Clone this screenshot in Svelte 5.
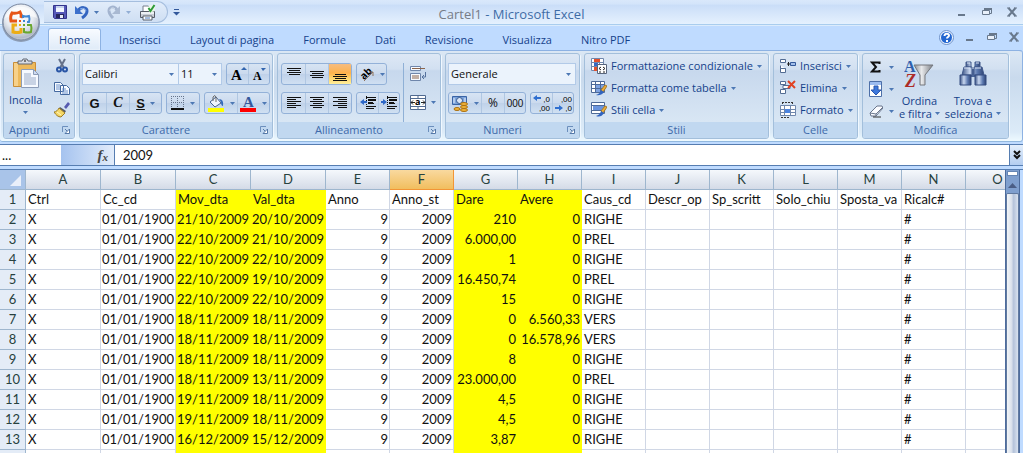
<script lang="ts">
	type Column = { name: string; wide?: boolean; yellow?: boolean; right?: boolean };

	const columns: Column[] = [
		{ name: 'A', wide: true },
		{ name: 'B', wide: true, right: true },
		{ name: 'C', wide: true, yellow: true, right: true },
		{ name: 'D', wide: true, yellow: true, right: true },
		{ name: 'E', right: true },
		{ name: 'F', right: true },
		{ name: 'G', yellow: true, right: true },
		{ name: 'H', yellow: true, right: true },
		{ name: 'I' },
		{ name: 'J' },
		{ name: 'K' },
		{ name: 'L' },
		{ name: 'M' },
		{ name: 'N' },
		{ name: 'O' }
	];

	const titles = [
		'Ctrl', 'Cc_cd', 'Mov_dta', 'Val_dta', 'Anno', 'Anno_st', 'Dare', 'Avere',
		'Caus_cd', 'Descr_op', 'Sp_scritt', 'Solo_chiu', 'Sposta_va', 'Ricalc#', ''
	];

	const movements = [
		['21/10/2009', '20/10/2009', '210', '0', 'RIGHE'],
		['22/10/2009', '21/10/2009', '6.000,00', '0', 'PREL'],
		['22/10/2009', '22/10/2009', '1', '0', 'RIGHE'],
		['22/10/2009', '19/10/2009', '16.450,74', '0', 'PREL'],
		['22/10/2009', '22/10/2009', '15', '0', 'RIGHE'],
		['18/11/2009', '18/11/2009', '0', '6.560,33', 'VERS'],
		['18/11/2009', '18/11/2009', '0', '16.578,96', 'VERS'],
		['18/11/2009', '18/11/2009', '8', '0', 'RIGHE'],
		['18/11/2009', '13/11/2009', '23.000,00', '0', 'PREL'],
		['19/11/2009', '18/11/2009', '4,5', '0', 'RIGHE'],
		['19/11/2009', '18/11/2009', '4,5', '0', 'RIGHE'],
		['16/12/2009', '15/12/2009', '3,87', '0', 'RIGHE']
	];

	const rows = [
		...movements.map(([mov, val, dare, avere, caus]) => [
			'X', '01/01/1900', mov, val, '9', '2009', dare, avere, caus, '', '', '', '', '#', ''
		]),
		columns.map(() => '')
	];

	const tabs = ['Home', 'Inserisci', 'Layout di pagina', 'Formule', 'Dati', 'Revisione', 'Visualizza', 'Nitro PDF'];

	let activeTab = $state('Home');
	let formula = $state('2009');
	let valign = $state('bottom');
</script>

{#snippet caret()}
	<svg class="caret" width="5" height="3" viewBox="0 0 5 3"><path d="M0 0h5L2.5 3z" fill="#4d78b4" /></svg>
{/snippet}

{#snippet launcher(name: string)}
	<button class="launcher" aria-label={name}>
		<svg width="8" height="8" viewBox="0 0 8 8">
			<path d="M.5 6V.5H6" fill="none" stroke="#6c8fbd" />
			<path d="M3 3l3 3" stroke="#5578a8" />
			<path d="M7.500 3v4.500H3z" fill="#fff" stroke="#5578a8" />
		</svg>
	</button>
{/snippet}

{#snippet lines(list: number[][])}
	<svg width="14" height="14" viewBox="0 0 14 14">
		{#each list as [x, y, w]}
			<rect {x} {y} width={w} height="1" fill="#111" />
		{/each}
	</svg>
{/snippet}

{#snippet windowButtons()}
	<button aria-label="Riduci a icona"><svg width="10" height="10"><path d="M1 8h7" stroke="#68788c" stroke-width="2" /></svg></button>
	<button aria-label="Ripristina">
		<svg width="10" height="10"><path d="M2.500 3V1.500h7v5H8" fill="none" stroke="#68788c" /><path d="M2 1h8v2H2z" fill="#68788c" /><path d="M.5 3.500h7v4h-7z" fill="#e8f0fa" stroke="#68788c" /></svg>
	</button>
	<button aria-label="Chiudi"><svg width="10" height="10"><path d="M0 1h3M7 1h3M0 9h3M7 9h3" stroke="#68788c" /><path d="M1.500 1l7 8M8.500 1l-7 8" stroke="#68788c" stroke-width="2" /></svg></button>
{/snippet}

{#snippet decimals(top: string, bottom: string, arrowTop: boolean)}
	<svg class="decimals" width="19" height="18" viewBox="0 0 19 18">
		<text x="18" y="8" text-anchor="end">{top}</text>
		<text x="18" y="17" text-anchor="end">{bottom}</text>
		{#if arrowTop}
			<path d="M1 4l4-3v2h4v2H5v2z" fill="#2f6fd0" />
		{:else}
			<path d="M9 14l-4-3v2H1v2h4v2z" fill="#2f6fd0" />
		{/if}
	</svg>
{/snippet}

<div class="excel">
	<header class="titlebar">
		<div class="left">
			<div class="quick">
				<button aria-label="Salva">
					<svg width="14" height="14" viewBox="0 0 14 14">
						<path d="M.5.5h13v13h-12l-1-1z" fill="#5558b8" stroke="#34348c" />
						<rect x="3" y="1" width="8" height="6" fill="#f2f6ff" />
						<path d="M3 1h8v2H3z" fill="#c6d2ee" />
						<rect x="3" y="9" width="8" height="4" fill="#26265c" /><rect x="7" y="10" width="3" height="3" fill="#e8ecf8" />
					</svg>
				</button>
				<button class="undo" aria-label="Annulla">
					<svg width="14" height="15" viewBox="0 0 14 15">
						<path d="M3 6c3-5 9-4 9 0 0 3-2 5-5 7" fill="none" stroke="#3465c0" stroke-width="3" />
						<path d="M0 1v8h8z" fill="#3c70cc" />
						<path d="M5 4q5-2 6 2" fill="none" stroke="#8db2ec" />
					</svg>
					{@render caret()}
				</button>
				<button class="redo" aria-label="Ripeti">
					<svg width="14" height="15" viewBox="0 0 14 15">
						<path d="M10 5C7 0 2 2 2 6c0 3 2 5 4 7" fill="none" stroke="#a3b4cf" stroke-width="3" />
						<path d="M13 1v8H5z" fill="#a9b9d2" /><path d="M3 6c0-3 3-4 5-2" fill="none" stroke="#dbe5f2" />
					</svg>
					{@render caret()}
				</button>
				<button aria-label="Stampa">
					<svg width="17" height="17" viewBox="0 0 17 17">
						<path d="M4 8V2h5l3 2v4z" fill="#fff" stroke="#777f8c" />
						<path d="M1.500 7.500h14v6h-14z" fill="#c9ced6" stroke="#555b66" />
						<path d="M2 8h13v2H2z" fill="#eef1f5" /><path d="M4 12h9v4H4z" fill="#fff" stroke="#59606c" />
						<path d="M6 14h5" stroke="#4c78ba" /><circle cx="12.500" cy="4.500" r="3.500" fill="#eaf7e6" /><path d="M9.500 4l2 3 4-6" fill="none" stroke="#2d9a38" stroke-width="2" />
					</svg>
				</button>
			</div>
			<button class="customize" aria-label="Personalizza barra di accesso rapido">
				<svg width="7" height="7"><path d="M1 .5h5" stroke="#31589c" /><path d="M0 3h7L3.500 6.500z" fill="#31589c" /></svg>
			</button>
		</div>
		<h1><span>Cartel1</span> - Microsoft Excel</h1>
		<div class="window">{@render windowButtons()}</div>
	</header>

	<button class="office" aria-label="Pulsante Office">
		<svg width="42" height="42" viewBox="0 0 42 42">
			<defs>
				<radialGradient id="orb" cx=".45" cy=".3" r=".8">
					<stop offset="0" stop-color="#fff" />
					<stop offset=".5" stop-color="#e7ebf1" />
					<stop offset=".8" stop-color="#b1b9c8" />
					<stop offset="1" stop-color="#eef3f8" />
				</radialGradient>
			</defs>
			<circle cx="21" cy="22" r="19" fill="#8d9db5" />
			<circle cx="21" cy="21" r="18" fill="url(#orb)" stroke="#7c8aa2" />
			<path d="M5 17c3-15 29-15 32 0-10-4-22-4-32 0z" fill="#fff" opacity=".6" />
			<path d="M17 20h-6q-1-5 1-8 4 1 8-1 2 3 1 6" fill="none" stroke="#e65518" stroke-width="3" />
			<path d="M23 17v-2q3 1 6 0 1 3 0 6h-2" fill="none" stroke="#3f87d5" stroke-width="2" />
			<path d="M17 24h-4v7q4 1 8 0v-4" fill="none" stroke="#ecad16" stroke-width="3" />
			<path d="M24 27v4q4 1 7 0 1-4 0-7h-4" fill="none" stroke="#69a72d" stroke-width="2" />
			<path d="M19 19h2v2h-2z" fill="#e65518" /><path d="M23 19h2v2h-2z" fill="#3f87d5" /><path d="M19 23h2v2h-2z" fill="#ecad16" /><path d="M23 23h2v2h-2z" fill="#69a72d" />
		</svg>
	</button>

	<nav class="tabs">
		{#each tabs as tab}
			<button class:active={tab === activeTab} onclick={() => (activeTab = tab)}>{tab}</button>
		{/each}
		<button class="help" aria-label="Guida">
			<svg width="15" height="15" viewBox="0 0 15 15">
				<circle cx="7.500" cy="7.500" r="7" fill="#eef5ff" stroke="#6c91ca" /><circle cx="7.500" cy="7.500" r="5.500" fill="#2467d0" />
				<path d="M5.500 6c0-3 4.500-3 4.500-.5 0 1.500-2 1.500-2 3M8 10v2" fill="none" stroke="#fff" stroke-width="2" />
			</svg>
		</button>
		<div class="window book">{@render windowButtons()}</div>
	</nav>

	<div class="ribbon">
		<section class="group clipboard">
			<div class="body">
				<button class="big">
					<svg width="28" height="32" viewBox="0 0 28 32">
						<path d="M1.500 4.500h22v24h-22z" fill="#edb95b" stroke="#c98e38" />
						<path d="M2 5h4v23H2z" fill="#f7d18a" />
						<path d="M6 6V3h4l1-2h4l1 2h4v3z" fill="#d5dae2" stroke="#626975" /><circle cx="13" cy="3" r="1" fill="#555" />
						<path d="M9.500 11.500h12l5 5v13h-17z" fill="#f6f9ff" stroke="#8c9cb8" />
						<path d="M21.500 11.500v5h5z" fill="#cfdcf2" stroke="#8c9cb8" />
						<path d="M12 16h7M12 18h7M12 20h12M12 22h12M12 24h12M12 26h12" stroke="#9bacc9" />
					</svg>
					<span>Incolla</span>
					{@render caret()}
				</button>
				<div class="stack">
					<button aria-label="Taglia">
						<svg width="16" height="16" viewBox="0 0 16 16">
							<path d="M5 1l5 9M11 1L6 10" stroke="#66728a" stroke-width="2" />
							<circle cx="5" cy="11.500" r="2" fill="none" stroke="#2a56a6" stroke-width="2" /><circle cx="11" cy="11.500" r="2" fill="none" stroke="#2a56a6" stroke-width="2" />
						</svg>
					</button>
					<button aria-label="Copia">
						<svg width="16" height="16" viewBox="0 0 16 16">
							<path d="M.5 2.500h6l3 3v6h-9zM6.500 5.500h6l3 3v6h-9z" fill="#f8fbff" stroke="#45699f" />
							<path d="M2 5h4M2 7h4M2 9h4M8 9h4M8 11h6M8 13h6" stroke="#6d92cc" />
						</svg>
					</button>
					<button aria-label="Copia formato">
						<svg width="16" height="16" viewBox="0 0 16 16">
							<path d="M10 5l4-5 2 2-4 5z" fill="#575bb0" /><path d="M6 5l6 4-2 3-6-4z" fill="#555b68" />
							<path d="M5 6l6 5-4 4c-3 0-5-2-7-5 2 0 4-2 5-4z" fill="#f4d766" stroke="#9c7c28" /><path d="M3 10l4 3" stroke="#fff5c0" />
						</svg>
					</button>
				</div>
			</div>
			<footer>Appunti {@render launcher('Opzioni appunti')}</footer>
		</section>

		<section class="group font">
			<div class="body rows">
				<div class="row">
					<div class="joined">
						<label class="combo name"><select aria-label="Tipo di carattere"><option>Calibri</option></select>{@render caret()}</label>
						<label class="combo size"><select aria-label="Dimensione"><option>11</option></select>{@render caret()}</label>
					</div>
					<div class="btns push">
						<button class="w22" aria-label="Aumenta dimensione"><svg width="20" height="18"><text x="3" y="15" class="serif" font-size="15">A</text><path d="M13 5l3-3 3 3z" fill="#3265ae" /></svg></button>
						<button class="w22" aria-label="Riduci dimensione"><svg width="20" height="18"><text x="4" y="15" class="serif" font-size="12">A</text><path d="M12 3h5l-3 3z" fill="#3265ae" /></svg></button>
					</div>
				</div>
				<div class="row spread">
					<div class="btns">
						<button class="w23 bold">G</button>
						<button class="w23 italic">C</button>
						<button class="w33"><u>S</u>{@render caret()}</button>
					</div>
					<div class="btns">
						<button class="w33" aria-label="Bordi">
							<svg width="14" height="14"><path d="M.5 0v12M6.500 0v12M12.500 0v12M0 .5h13M0 6.500h13" stroke="#65748c" stroke-dasharray="1 1" /><path d="M0 13h13" stroke="#111" stroke-width="2" /></svg>
							{@render caret()}
						</button>
					</div>
					<div class="btns">
						<button class="w33" aria-label="Colore riempimento">
							<svg width="17" height="17" viewBox="0 0 17 17">
								<path d="M2 7l6-5 5 6-6 4z" fill="#eef4fd" stroke="#48638f" /><path d="M5 6V2q2-3 3 0v5" fill="none" stroke="#6a6a6a" />
								<path d="M11 4q5 0 4 7-2 0-2-4z" fill="#356cbc" /><path d="M0 13h16v4H0z" fill="#ff0" />
							</svg>
							{@render caret()}
						</button>
						<button class="w33" aria-label="Colore carattere">
							<svg width="17" height="17"><text x="3" y="12" class="serif blue" font-size="15">A</text><path d="M0 13h16v4H0z" fill="#f00" /></svg>
							{@render caret()}
						</button>
					</div>
				</div>
			</div>
			<footer>Carattere {@render launcher('Opzioni carattere')}</footer>
		</section>

		<section class="group align">
			<div class="body">
				<div class="rows">
					<div class="row">
						<div class="btns">
							<button class="w23" class:on={valign === 'top'} onclick={() => (valign = 'top')} aria-label="Allinea in alto">{@render lines([[0, 1, 14], [2, 3, 11], [0, 5, 14], [2, 7, 11]])}</button>
							<button class="w23" class:on={valign === 'middle'} onclick={() => (valign = 'middle')} aria-label="Allinea al centro verticalmente">{@render lines([[0, 4, 14], [2, 6, 11], [0, 8, 14], [2, 10, 11]])}</button>
							<button class="w23" class:on={valign === 'bottom'} onclick={() => (valign = 'bottom')} aria-label="Allinea in basso">{@render lines([[2, 7, 11], [0, 9, 14], [2, 11, 11], [0, 13, 14]])}</button>
						</div>
						<div class="btns">
							<button class="w29" aria-label="Orientamento">
								<svg width="17" height="18"><text x="2" y="12" transform="rotate(-45 8 9)" font-size="10" font-weight="bold">ab</text><path d="M6 16l9-9M15 11V7h-4" fill="none" stroke="#8d725c" /></svg>
								{@render caret()}
							</button>
						</div>
					</div>
					<div class="row">
						<div class="btns">
							<button class="w23" aria-label="Allinea a sinistra">{@render lines([[0, 1, 14], [0, 3, 9], [0, 5, 14], [0, 7, 9], [0, 9, 14], [0, 11, 9]])}</button>
							<button class="w23" aria-label="Centra">{@render lines([[0, 1, 14], [3, 3, 9], [0, 5, 14], [3, 7, 9], [0, 9, 14], [3, 11, 9]])}</button>
							<button class="w23" aria-label="Allinea a destra">{@render lines([[0, 1, 14], [5, 3, 9], [0, 5, 14], [5, 7, 9], [0, 9, 14], [5, 11, 9]])}</button>
						</div>
						<div class="btns">
							<button class="w22" aria-label="Riduci rientro">
								<svg width="16" height="14"><path d="M6 1.500h10M6 10.500h10M8 7.500h6M6 12.500h8" stroke="#111" /><path d="M8 4h8M8 7h5" stroke="#111" stroke-width="2" /><path d="M6.500 0v14" stroke="#111" stroke-dasharray="1 1" /><path d="M0 6l4-3v2h3v2H4v2z" fill="#2d67c8" /></svg>
							</button>
							<button class="w22" aria-label="Aumenta rientro">
								<svg width="16" height="14"><path d="M6 1.500h10M6 10.500h10M8 7.500h6M6 12.500h8" stroke="#111" /><path d="M8 4h8M8 7h5" stroke="#111" stroke-width="2" /><path d="M6.500 0v14" stroke="#111" stroke-dasharray="1 1" /><path d="M6 6L2 3v2H0v2h2v2z" fill="#2d67c8" /></svg>
							</button>
						</div>
					</div>
				</div>
				<div class="rows wrapping">
					<button class="flat" aria-label="Testo a capo">
						<svg width="17" height="16"><path d="M.5.5h10v4H.5zM.5 7.500h10v7H.5z" fill="#f7faff" stroke="#6f86ab" /><path d="M2 2.500h13M2 10h7M2 12h7" stroke="#8b654c" /><path d="M15.500 6v5H12M14 9l-2 2 2 2" fill="none" stroke="#55719c" /></svg>
					</button>
					<button class="flat" aria-label="Unisci e centra">
						<svg width="16" height="15"><path d="M.5.5h15v14H.5zM8 .5v3M8 11v3.500M.5 3.500h15M.5 11.500h15" fill="#fff" stroke="#506a91" /><path d="M1 7.500h4M11 7.500h4M3 5.500l-2 2 2 2M13 5.500l2 2-2 2" fill="none" stroke="#222" /><text x="5" y="10" font-size="9" font-weight="bold">a</text></svg>
						{@render caret()}
					</button>
				</div>
			</div>
			<footer>Allineamento {@render launcher('Opzioni allineamento')}</footer>
		</section>

		<section class="group number">
			<div class="body rows">
				<label class="combo format"><select aria-label="Formato numero"><option>Generale</option></select>{@render caret()}</label>
				<div class="row">
					<div class="btns">
						<button class="w33" aria-label="Formato contabilità">
							<svg width="18" height="17"><path d="M1.500 1.500h14v8h-14z" fill="#7ea5dc" stroke="#3a64a6" /><circle cx="8.500" cy="5.500" r="3" fill="#d9e6f8" stroke="#34578e" /><path d="M3 3v5M14 3v5" stroke="#e9f1fc" /><g fill="#f0b33a" stroke="#a97012"><ellipse cx="13" cy="15" rx="3.500" ry="1.500" /><ellipse cx="13" cy="12" rx="3.500" ry="1.500" /><ellipse cx="13" cy="9" rx="3.500" ry="1.500" /><ellipse cx="6" cy="14" rx="3" ry="1.500" /></g></svg>
							{@render caret()}
						</button>
						<button class="w23 sign">%</button>
						<button class="w22 small">000</button>
					</div>
					<div class="btns">
						<button class="w22" aria-label="Aumenta decimali">{@render decimals(',0', ',00', true)}</button>
						<button class="w22" aria-label="Diminuisci decimali">{@render decimals(',00', ',0', false)}</button>
					</div>
				</div>
			</div>
			<footer>Numeri {@render launcher('Opzioni numeri')}</footer>
		</section>

		<section class="group styles">
			<div class="body list">
				<button>
					<svg width="16" height="16"><path d="M.5.5h12v12H.5zM.5 4.500h12M.5 8.500h12M4.500.5v12M8.500.5v12" fill="#fff" stroke="#7087ac" /><path d="M3 1h6v3H3zM3 9h3v4H3z" fill="#e2502c" /><path d="M3 5h4v3H3z" fill="#3569c4" /><path d="M6.500 6.500h9v9h-9z" fill="#fff" stroke="#57657c" /><path d="M10 9l-2 1.500 2 1.500M12 9l2 1.500-2 1.500M8 14h2M12 14h2" fill="none" stroke="#222" /></svg>
					Formattazione condizionale {@render caret()}
				</button>
				<button>
					<svg width="16" height="16"><path d="M.5 1.500h13v11H.5z" fill="#fff" stroke="#4e6a98" /><path d="M4 5h9v7H4z" fill="#7fa3e0" /><path d="M.5 4.500h13M.5 8.500h13M4.500 1v12M9.500 1v12" stroke="#4e6a98" /><path d="M10 10l4-5 2 1-4 6z" fill="#f0ad38" stroke="#a47a28" /><path d="M5 15q5 1 8-3l-3-2q-1 4-5 5z" fill="#3164c0" /></svg>
					Formatta come tabella {@render caret()}
				</button>
				<button>
					<svg width="16" height="16"><path d="M.5.5h13v11H.5z" fill="#fff" stroke="#4e6a98" /><path d="M2 4h11v4H2z" fill="#6a94dd" /><path d="M.5 3.500h13M.5 8.500h13" stroke="#4e6a98" /><path d="M10 9l4-5 2 1-4 6z" fill="#f0ad38" stroke="#a47a28" /><path d="M5 14q5 2 8-3l-3-2q-1 4-5 5z" fill="#3164c0" /></svg>
					Stili cella {@render caret()}
				</button>
			</div>
			<footer>Stili</footer>
		</section>

		<section class="group cells">
			<div class="body list">
				<button>
					<svg width="16" height="16"><path d="M.5 1.500h5v3h-5zM.5 10.500h5v4h-5zM.5 7.500v3h5" fill="#fff" stroke="#536c93" /><path d="M7 6h4M8.500 4v4" stroke="#222" /><path d="M10.500 4.500h5v3h-5z" fill="#a3bfea" stroke="#34599a" /></svg>
					Inserisci {@render caret()}
				</button>
				<button>
					<svg width="16" height="16"><path d="M.5 1.500h5v3h-5zM.5 9.500h5v4h-5zM3 5.500h7v3H3z" fill="#fff" stroke="#536c93" /><path d="M8 1l7 7M15 1L8 8" stroke="#e14223" stroke-width="2" /></svg>
					Elimina {@render caret()}
				</button>
				<button>
					<svg width="16" height="16"><path d="M.5 3.500h15v10H.5zM.5 7.500h15M.5 10.500h15M4.500 3v11M10.500 3v11" fill="#fff" stroke="#6f87ad" /><path d="M5 7h5v4H5z" fill="#4b84e0" /><path d="M2 .5h11M2.500 0v3M12.500 0v3M1 15.500h9" stroke="#333" stroke-dasharray="2 1" /></svg>
					Formato {@render caret()}
				</button>
			</div>
			<footer>Celle</footer>
		</section>

		<section class="group edit">
			<div class="body">
				<div class="list icons">
					<button aria-label="Somma"><svg width="14" height="14"><path d="M10.500 4V2.500H3l4 4.500-4 4.500h7.500V10" fill="none" stroke="#111" stroke-width="2" /></svg>{@render caret()}</button>
					<button aria-label="Riempimento"><svg width="14" height="16"><path d="M.5.5h12v15H.5z" fill="#fff" stroke="#4d6fa8" /><path d="M1 1h11v3H1z" fill="#9cbcf0" /><path d="M5 5h4v4h3l-5 5-5-5h3z" fill="#3d78dc" stroke="#2a57ae" /></svg>{@render caret()}</button>
					<button aria-label="Cancella"><svg width="14" height="14"><path d="M1 9l7-7h5l1 2-7 8H2z" fill="#fbfcff" stroke="#68758c" /><path d="M1 9l6 1 7-7M7 10v2" fill="none" stroke="#68758c" /><path d="M4 13h8" stroke="#333" /></svg>{@render caret()}</button>
				</div>
				<button class="big">
					<svg width="30" height="30" viewBox="0 0 30 30">
						<defs><linearGradient id="funnel"><stop offset="0" stop-color="#8c8f94" /><stop offset=".4" stop-color="#e9eaec" /><stop offset="1" stop-color="#7b7e84" /></linearGradient></defs>
						<path d="M10 6h19l-8 10v10h-5V16z" fill="url(#funnel)" stroke="#74777d" />
						<text x="0" y="13" class="serif" font-size="16" fill="#2f60ad">A</text><text x="1" y="28" class="serif" font-size="18" font-style="italic" fill="#ac2c28">Z</text>
					</svg>
					<span>Ordina</span>
					<span>e filtra {@render caret()}</span>
				</button>
				<button class="big">
					<svg width="28" height="30" viewBox="0 0 28 30">
						<defs><linearGradient id="tube"><stop offset="0" stop-color="#3c5486" /><stop offset=".35" stop-color="#c7d6ef" /><stop offset=".7" stop-color="#5b78af" /><stop offset="1" stop-color="#2d4272" /></linearGradient></defs>
						<path d="M11 10h6v8h-6z" fill="#4a6497" /><path d="M7 3h5v5H7zM16 3h5v5h-5z" fill="url(#tube)" stroke="#40588a" />
						<path d="M5 8h8v8H3zM15 8h8l2 8H15z" fill="url(#tube)" stroke="#40588a" />
						<path d="M1 16h11v10H1z" fill="url(#tube)" stroke="#354d80" /><path d="M16 16h11v10H16z" fill="url(#tube)" stroke="#354d80" />
						<path d="M8 4h3M17 4h3M5 9h6M16 9h6" stroke="#dce7f8" />
					</svg>
					<span>Trova e</span>
					<span>seleziona {@render caret()}</span>
				</button>
			</div>
			<footer>Modifica</footer>
		</section>
	</div>

	<div class="formula">
		<div class="namebox">...</div>
		<button class="fx" aria-label="Inserisci funzione"><i>f</i><small>x</small></button>
		<input aria-label="Barra della formula" bind:value={formula} />
		<button class="expand" aria-label="Espandi barra della formula">
			<svg width="8" height="10"><path d="M1 1l3 3 3-3M1 5l3 3 3-3" fill="none" stroke="#111" stroke-width="2" /></svg>
		</button>
	</div>

	<main>
		<div class="sheet">
			<table>
				<colgroup>
					<col class="index" />
					{#each columns as column}<col class:wide={column.wide} />{/each}
				</colgroup>
				<thead>
					<tr>
						<th class="corner" aria-label="Seleziona tutto"><svg width="11" height="11"><path d="M11 0v11H0z" fill="#e9effa" /></svg></th>
						{#each columns as column}
							<th scope="col" class:selected={column.name === 'F'}>{column.name}</th>
						{/each}
					</tr>
				</thead>
				<tbody>
					<tr>
						<th scope="row">1</th>
						{#each titles as title, i}
							<td class:yellow={columns[i].yellow}>{title}</td>
						{/each}
					</tr>
					{#each rows as row, n}
						<tr>
							<th scope="row">{n + 2}</th>
							{#each row as cell, i}
								<td class:yellow={columns[i].yellow} class:right={columns[i].right}>{cell}</td>
							{/each}
						</tr>
					{/each}
				</tbody>
			</table>
		</div>
		<div class="scroll">
			<div class="split"></div>
			<button class="up" aria-label="Scorri in alto"><svg width="9" height="5"><path d="M0 5l4.500-5L9 5z" fill="#4a5d85" /></svg></button>
			<div class="thumb"></div>
		</div>
	</main>
</div>

<style>
	:global(body) {
		margin: 0;
		overflow: hidden;
	}

	.excel {
		position: relative;
		display: flex;
		flex-direction: column;
		height: 100vh;
		background: #bfdbff;
		color: #15428b;
		font: 11px/14px 'Open Sans', 'Noto Sans', sans-serif;
	}

	button {
		display: flex;
		align-items: center;
		justify-content: center;
		margin: 0;
		padding: 0;
		border: 0;
		background: none;
		color: inherit;
		font: inherit;
		white-space: nowrap;
	}

	svg {
		display: block;
		flex: none;
	}

	/* title bar */
	.titlebar {
		display: grid;
		grid-template-columns: 1fr auto 1fr;
		align-items: center;
		height: 24px;
		border-bottom: 1px solid #a9cdee;
		box-shadow: 0 1px #dcecfc;
		background: linear-gradient(#d9e8fb 0, #d3e4fa 18%, #c9ddf8 20%, #e5f1fe 100%);
	}

	.left {
		display: flex;
		align-items: center;
		padding-left: 44px;
	}

	.quick {
		display: flex;
		align-items: center;
		gap: 8px;
		height: 20px;
		padding: 0 11px 0 9px;
		border: 1px solid #a5bede;
		border-left: 0;
		border-radius: 0 11px 11px 0;
		background: linear-gradient(#e1ecfa, #cfdff3);
	}

	.undo,
	.redo {
		gap: 5px;
	}

	.redo .caret {
		opacity: 0.5;
	}

	.customize {
		margin-left: 5px;
	}

	h1 {
		margin: 0;
		padding-top: 4px;
		color: #3f6ca6;
		font-size: 13px;
		font-weight: normal;
	}

	h1 span {
		color: #767c86;
	}

	.window {
		display: flex;
		justify-content: flex-end;
		gap: 15px;
		padding-right: 6px;
	}

	.window.book {
		gap: 12px;
		padding: 0 4px 8px 3px;
	}

	.office {
		position: absolute;
		top: 1px;
		left: 0;
		z-index: 1;
	}

	/* tabs */
	.tabs {
		display: flex;
		align-items: flex-end;
		gap: 7px;
		height: 25px;
		padding-left: 48px;
	}

	.tabs > button {
		height: 22px;
		padding: 0 10px;
		border: 1px solid transparent;
		border-bottom: 0;
	}

	.tabs > .active {
		border-color: #8db2e3;
		border-radius: 3px 3px 0 0;
		background: linear-gradient(#f8fbff, #dfebf8);
		box-shadow: inset 0 0 2px #fff;
	}

	.tabs > .help {
		margin-left: auto;
		padding: 0 0 4px;
	}

	/* ribbon */
	.ribbon {
		display: flex;
		gap: 4px;
		height: 86px;
		padding: 2px 3px;
		border-top: 1px solid #8db2e3;
		border-bottom: 1px solid #92b8de;
		border-radius: 0 3px 3px 3px;
		background: linear-gradient(#dbe7f4, #c9daed 30%, #dcebf8 90%, #eefaff);
		box-shadow: inset 1px 0 #eaf4ff, inset -1px 0 #8db2e3;
	}

	.group {
		display: flex;
		flex-direction: column;
		box-sizing: border-box;
		border: 1px solid #a3bfdb;
		border-radius: 3px;
		background: linear-gradient(#dde8f5, #d2e0f1 18%, #c7d8ed 20%, #d8e6f4 80%);
		box-shadow: 1px 1px #f0f8ff;
		overflow: hidden;
	}

	.group .body {
		display: flex;
		flex: 1;
		box-sizing: border-box;
	}

	.group footer {
		display: flex;
		align-items: center;
		justify-content: center;
		position: relative;
		height: 16px;
		background: #c1d8f0;
		color: #3e6aaa;
	}

	.launcher {
		position: absolute;
		right: 4px;
		top: 4px;
	}

	.clipboard { width: 72px; }
	.font { width: 194px; }
	.align { width: 164px; }
	.number { width: 135px; }
	.styles { width: 185px; }
	.cells { width: 85px; }
	.edit { width: 147px; }

	.clipboard footer {
		justify-content: flex-start;
		padding-left: 5px;
	}

	.clipboard .body {
		justify-content: space-between;
		padding: 4px 4px 0 5px;
	}

	.font footer,
	.align footer,
	.number footer {
		padding-right: 20px;
	}

	.big {
		flex-direction: column;
		justify-content: flex-start;
	}

	.big > svg:first-child {
		margin-bottom: 5px;
	}

	.big span {
		display: flex;
		align-items: center;
		gap: 3px;
		line-height: 13px;
	}

	.clipboard .big > svg:first-child {
		margin-bottom: 3px;
	}

	.clipboard .big span {
		margin-bottom: 5px;
	}

	.stack {
		display: flex;
		flex-direction: column;
		gap: 6px;
	}

	.rows {
		display: flex;
		flex-direction: column;
		gap: 7px;
	}

	.font .body,
	.number .body {
		padding: 9px 3px 0 2px;
	}

	.align .body {
		padding: 9px 3px 0;
	}

	.row {
		display: flex;
		gap: 4px;
	}

	.spread {
		justify-content: space-between;
	}

	.joined {
		display: flex;
	}

	.push {
		margin-left: auto;
	}

	.btns {
		display: flex;
		box-sizing: border-box;
		height: 22px;
		border: 1px solid #93b1d8;
		border-radius: 3px;
		background: linear-gradient(#d7e4f3, #cbdaee 48%, #bfd1e9 50%, #d0e0f2);
	}

	.btns button {
		box-sizing: border-box;
		gap: 5px;
		color: #111;
	}

	.btns button + button {
		border-left: 1px solid #b0c7e2;
	}

	.w22 { width: 21px; }
	.w23 { width: 23px; }
	.w29 { width: 29px; }
	.w33 { width: 32px; }

	.w29 {
		gap: 2px;
	}

	.on {
		background: linear-gradient(#f5bc80, #ffb24c 45%, #ffd36b 70%, #ffef9c);
	}

	.btns .bold,
	u {
		font: bold 13px 'Liberation Sans', sans-serif;
	}

	.btns .italic {
		font: italic bold 14px 'Liberation Serif', serif;
	}

	.serif {
		font-family: 'Liberation Serif', serif;
		font-weight: bold;
	}

	.blue {
		fill: #34589c;
	}

	.btns .sign {
		font-size: 12px;
	}

	.btns .small {
		font: 10px 'Liberation Sans', sans-serif;
	}

	.decimals {
		font: 8px 'Liberation Sans', sans-serif;
	}

	.combo {
		position: relative;
		display: flex;
		box-sizing: border-box;
		height: 22px;
		border: 1px solid #b2cae8;
		background: #ebf3fc;
	}

	.combo select {
		width: 100%;
		padding: 0 2px;
		border: 0;
		background: none;
		color: #111;
		font: inherit;
		appearance: none;
	}

	.combo .caret {
		position: absolute;
		top: 9px;
		right: 4px;
		pointer-events: none;
	}

	.combo.name { width: 97px; }
	.combo.size { width: 43px; border-left-width: 0; }

	.wrapping {
		gap: 13px;
		margin-left: 3px;
		padding: 3px 0 6px 6px;
		border-left: 1px solid #8fb0d6;
	}

	.flat {
		justify-content: flex-start;
		gap: 5px;
	}

	.list {
		display: flex;
		flex-direction: column;
		align-items: flex-start;
		gap: 6px;
	}

	.list button {
		gap: 4px;
		height: 16px;
	}

	.styles .body,
	.cells .body {
		padding: 4px 6px 0;
	}

	.icons button {
		gap: 6px;
	}

	.edit .body {
		gap: 5px;
		padding: 5px 4px 0 6px;
	}

	/* formula bar */
	.formula {
		display: flex;
		height: 20px;
		margin-top: 2px;
		border-top: 1px solid #567db1;
		border-bottom: 1px solid #567db1;
		background: #fff;
		color: #111;
		font: 13px/20px Lato, sans-serif;
	}

	.namebox {
		width: 59px;
		padding-left: 2px;
	}

	.fx {
		width: 54px;
		justify-content: flex-end;
		padding-right: 6px;
		border-right: 1px solid #567db1;
		background: linear-gradient(90deg, #a5c3ef, #e2ecfa);
		color: #444;
		font-family: 'Liberation Serif', serif;
		font-size: 15px;
		font-style: italic;
		font-weight: bold;
	}

	.fx small {
		padding-top: 3px;
		font-size: 11px;
	}

	.formula input {
		flex: 1;
		min-width: 0;
		padding: 0 8px;
		border: 0;
		outline: 0;
		background: none;
		color: #111;
		font: inherit;
	}

	.expand {
		width: 14px;
		border-left: 1px solid #567db1;
		background: linear-gradient(#e4effc, #b3cdf0);
	}

	/* sheet */
	main {
		display: flex;
		flex: 1;
		min-height: 0;
		margin-top: 3px;
		border-top: 1px solid #567db1;
	}

	.sheet {
		flex: 1;
		overflow: hidden;
		background: #fff;
	}

	table {
		width: 0;
		border-collapse: separate;
		border-spacing: 0;
		table-layout: fixed;
		color: #111;
		font: 13px/19px Lato, sans-serif;
	}

	col { width: 64px; }
	col.wide { width: 75px; }
	col.index { width: 26px; }

	th,
	td {
		box-sizing: border-box;
		height: 20px;
		padding: 0 0 0 2px;
		overflow: hidden;
		border-right: 1px solid #d0d7e5;
		border-bottom: 1px solid #d0d7e5;
		text-align: left;
		white-space: nowrap;
	}

	th {
		padding: 0;
		border-color: #9eb6ce;
		background: #e4ecf7;
		color: #27413e;
		font-weight: normal;
		text-align: center;
	}

	thead th {
		background: linear-gradient(#f5f8fc, #d4dbe7);
	}

	thead .corner {
		padding: 5px 4px 3px 10px;
		background: #a9c4e9;
	}

	thead .selected {
		border-color: #f29536;
		background: linear-gradient(#f9d99f, #f1be5e);
	}

	.right {
		padding: 0 1px;
		text-align: right;
	}

	.yellow {
		border-color: #ff0;
		background: #ff0;
	}

	/* scroll bar */
	.scroll {
		display: flex;
		flex-direction: column;
		width: 13px;
		margin-right: 3px;
		border-left: 1px solid #4e6d9e;
		border-right: 1px solid #4e6d9e;
		background: #7f9fce;
	}

	.split {
		height: 3px;
		margin: 1px;
		border: 1px solid #6686b4;
		background: #fff;
	}

	.up {
		height: 16px;
	}

	.thumb {
		flex: 1;
		border: 1px solid #60799f;
		border-bottom: 0;
		border-radius: 2px 2px 0 0;
		background: linear-gradient(90deg, #f2f5f9, #dbe2ec 40%, #b5c3da 60%, #d9e2ef);
	}
</style>
